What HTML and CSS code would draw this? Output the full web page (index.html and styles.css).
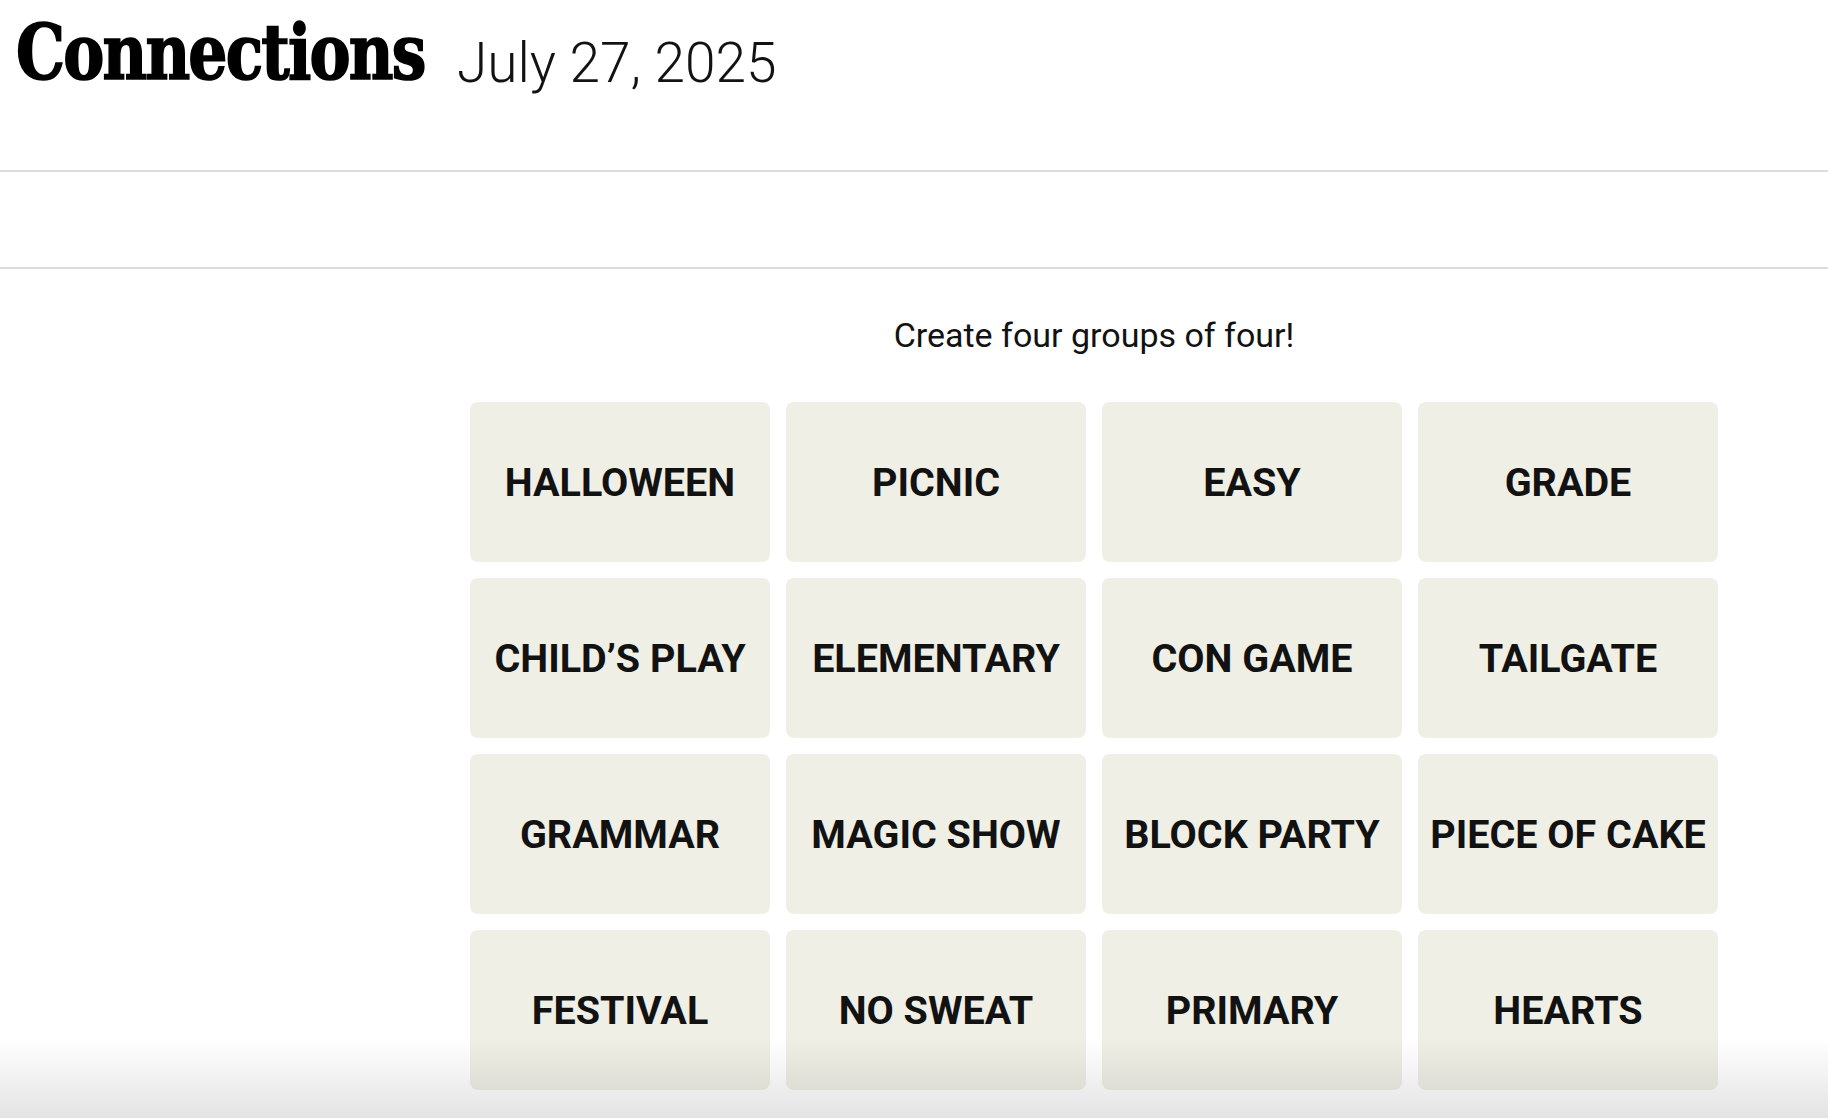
FILE: index.html
```html
<!DOCTYPE html>
<html lang="en">
<head>
<meta charset="utf-8">
<title>Connections</title>
<link rel="stylesheet" href="styles.css">
</head>
<body>
<header class="masthead">
  <h1 class="title">Connections</h1>
  <span class="date">July 27, 2025</span>
</header>
<div class="toolbar"></div>
<main class="game">
  <section class="board-wrap">
    <p class="prompt">Create four groups of four!</p>
    <div class="board">
      <button class="tile">HALLOWEEN</button>
      <button class="tile">PICNIC</button>
      <button class="tile">EASY</button>
      <button class="tile">GRADE</button>
      <button class="tile">CHILD’S PLAY</button>
      <button class="tile">ELEMENTARY</button>
      <button class="tile">CON GAME</button>
      <button class="tile">TAILGATE</button>
      <button class="tile">GRAMMAR</button>
      <button class="tile">MAGIC SHOW</button>
      <button class="tile">BLOCK PARTY</button>
      <button class="tile">PIECE OF CAKE</button>
      <button class="tile">FESTIVAL</button>
      <button class="tile">NO SWEAT</button>
      <button class="tile">PRIMARY</button>
      <button class="tile">HEARTS</button>
    </div>
  </section>
</main>
<div class="fade"></div>
</body>
</html>
```

FILE: styles.css
```css
html, body {
  margin: 0;
  padding: 0;
  background: #ffffff;
  color: #121212;
  font-family: Roboto, "Liberation Sans", sans-serif;
  overflow: hidden;
}

.masthead {
  height: 170px;
  display: flex;
  align-items: flex-start;
  padding-left: 16px;
  border-bottom: 2px solid #dcdcdc;
}

.title {
  margin: 15px -45px 0 0;
  font-family: "DejaVu Serif", "Liberation Serif", serif;
  font-stretch: condensed;
  font-weight: 700;
  font-size: 76px;
  line-height: 76px;
  letter-spacing: -2px;
  color: #000;
  -webkit-text-stroke: 1.6px #000;
  transform: scaleX(0.9);
  transform-origin: left center;
}

.date {
  margin: 36px 0 0 32px;
  font-family: Roboto, "Liberation Sans", sans-serif;
  font-weight: 300;
  font-size: 55px;
  line-height: 55px;
  letter-spacing: 0;
  color: #121212;
}

.toolbar {
  height: 95px;
  border-bottom: 2px solid #dcdcdc;
}

.game {
  padding-left: 470px;
}

.board-wrap {
  width: 1248px;
}

.prompt {
  margin: 49px 0 50px 0;
  text-align: center;
  font-size: 34px;
  line-height: 34px;
  font-weight: 400;
}

.board {
  display: grid;
  grid-template-columns: repeat(4, 300px);
  grid-auto-rows: 160px;
  gap: 16px;
}

.tile {
  border: none;
  border-radius: 8px;
  background: #efefe6;
  color: #121212;
  font-family: Roboto, "Liberation Sans", sans-serif;
  font-weight: 700;
  font-size: 39.5px;
  padding: 0;
  text-transform: uppercase;
}

.fade {
  position: fixed;
  left: 0;
  right: 0;
  bottom: 0;
  height: 80px;
  background: linear-gradient(to bottom, rgba(0,0,0,0), rgba(0,0,0,0.11));
  pointer-events: none;
}
```
